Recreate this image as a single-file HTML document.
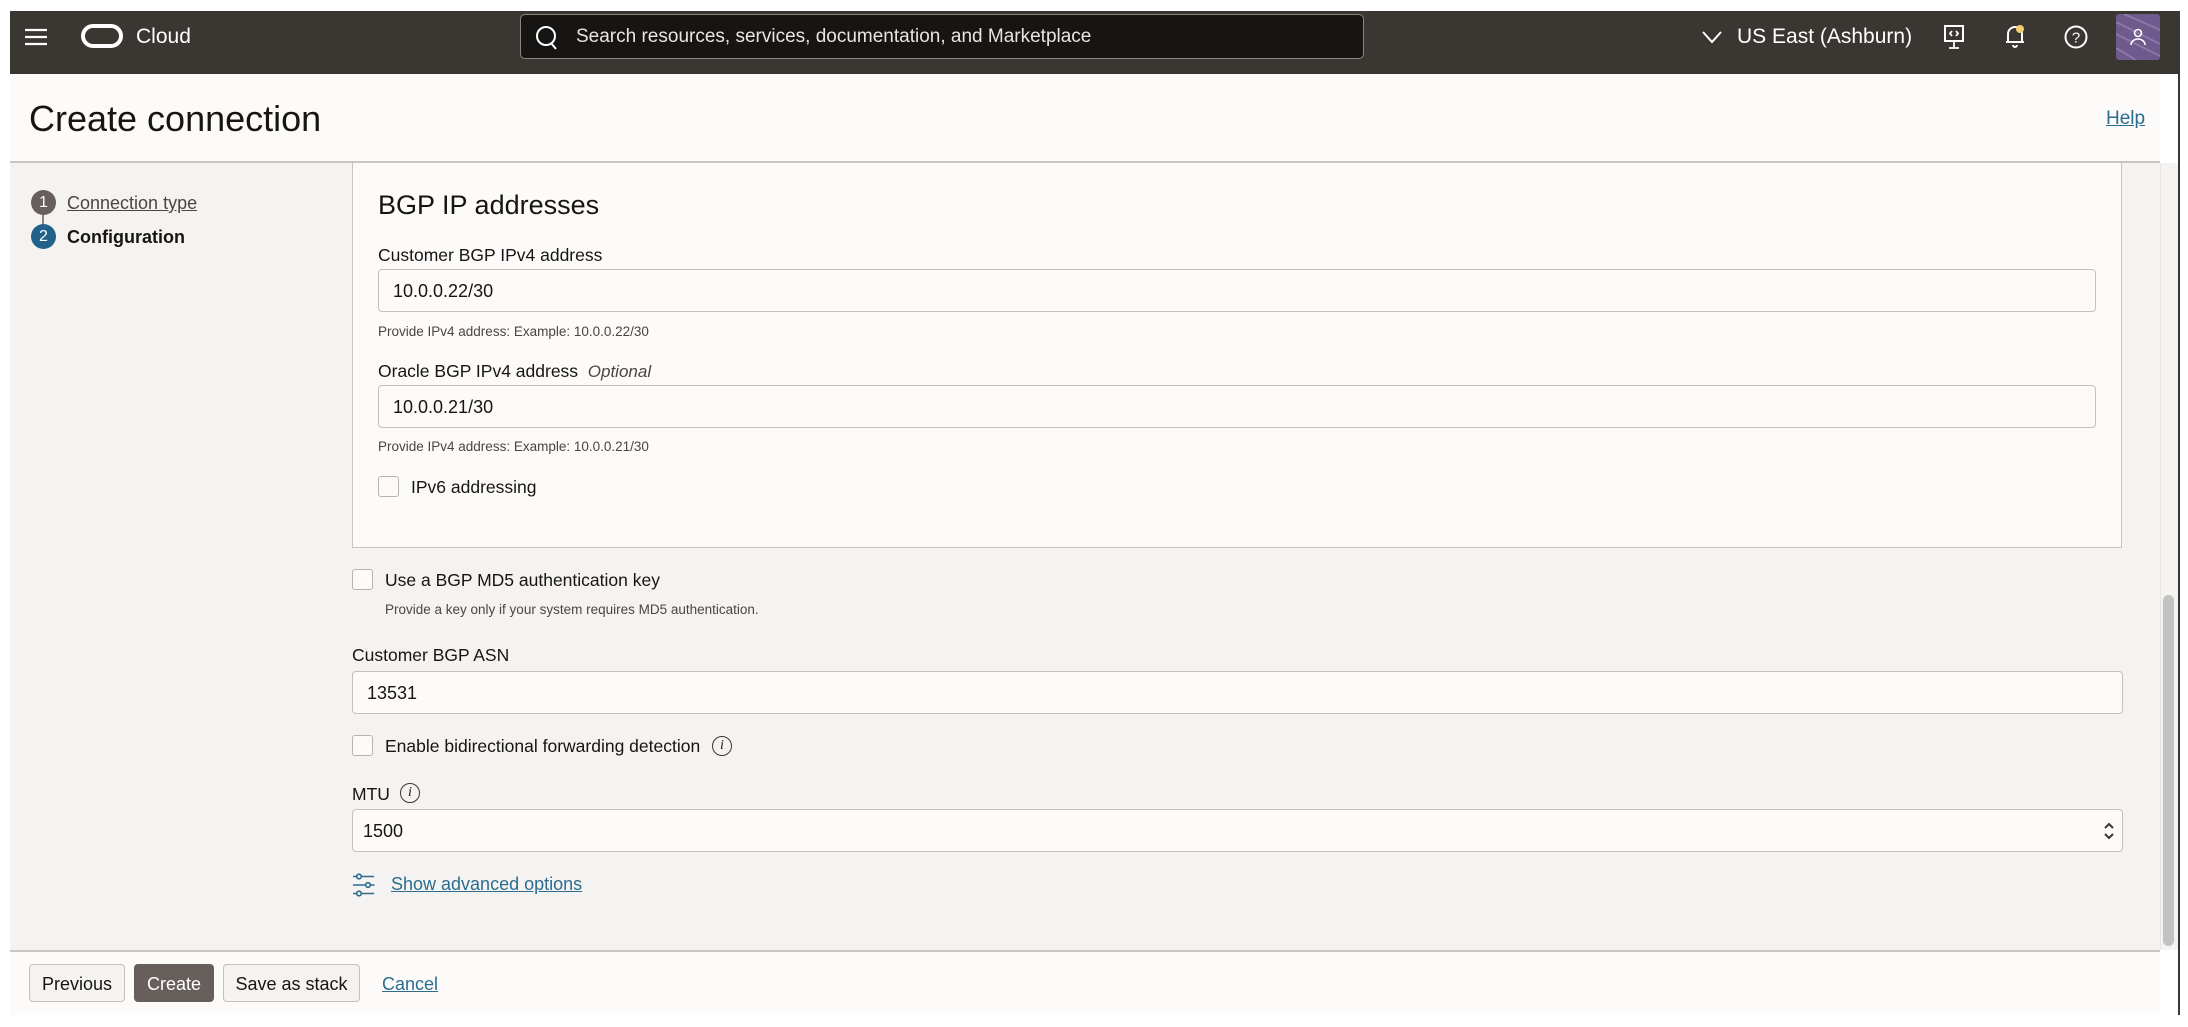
<!DOCTYPE html>
<html><head><meta charset="utf-8"><style>
*{box-sizing:border-box;margin:0;padding:0}
body{width:2188px;height:1027px;background:#fff;position:relative;overflow:hidden;font-family:"Liberation Sans",Arial,sans-serif;color:#161513}
.a{position:absolute}
.hdr{left:10px;top:11px;width:2168px;height:63px;background:#3a3632}
.search{left:520px;top:14px;width:844px;height:45px;background:#161513;border:1.5px solid #8b8580;border-radius:5px}
.title{left:10px;top:74px;width:2150px;height:89px;background:#fcfbfa;border-bottom:2px solid #c9c5c0}
.side{left:10px;top:163px;width:2150px;height:787px;background:#f5f3f1}
.box{left:352px;top:163px;width:1770px;height:385px;background:#fcfbfa;border:1.5px solid #c9c5c0;border-top:none}
.inp{background:#fcfbfa;border:1.5px solid #c4c0bb;border-radius:4px;font-size:18px;padding-left:14px;display:flex;align-items:center;padding-top:2px}
.lbl{font-size:17.5px}
.help{font-size:13.5px;color:#4a4541}
.cb{width:21px;height:21px;border:1.5px solid #b8b3ae;border-radius:3px;background:#fcfbfa}
.footer{left:10px;top:950px;width:2150px;height:65px;background:#fcfbfa;border-top:2px solid #c9c5c0}
.btn{top:964px;height:38px;border:1.5px solid #c4c0bb;border-radius:4px;background:#f5f3f1;font-size:18px;display:flex;align-items:center;justify-content:center;padding-top:2px}
.link{color:#2b6c8f;text-decoration:underline}
.info{width:20px;height:20px;border:1.5px solid #3a3632;border-radius:50%;font-family:"Liberation Serif",serif;font-style:italic;font-size:14px;display:flex;align-items:center;justify-content:center}
</style></head><body>
<div class="a hdr"></div>
<svg class="a" style="left:24px;top:27px" width="24" height="20"><path d="M1 3h22M1 10h22M1 17h22" stroke="#fff" stroke-width="2.2"/></svg>
<div class="a" style="left:81px;top:24px;width:42px;height:24px;border:4px solid #fff;border-radius:12px"></div>
<div class="a" style="left:136px;top:25px;font-size:21px;color:#fff">Cloud</div>
<div class="a search"></div>
<svg class="a" style="left:534px;top:24px" width="26" height="28"><circle cx="12" cy="12" r="9" fill="none" stroke="#fff" stroke-width="2"/><path d="M17 19l5 6" stroke="#fff" stroke-width="2"/></svg>
<div class="a" style="left:576px;top:26px;font-size:19px;color:#e8e5e1">Search resources, services, documentation, and Marketplace</div>
<svg class="a" style="left:1701px;top:29px" width="22" height="16"><path d="M2 3l9 10 9-10" fill="none" stroke="#fff" stroke-width="2"/></svg>
<div class="a" style="left:1737px;top:25px;font-size:21px;color:#fff">US East (Ashburn)</div>
<svg class="a" style="left:1942px;top:24px" width="24" height="26"><rect x="3" y="2" width="18" height="15" fill="none" stroke="#fff" stroke-width="2"/><path d="M12 17v6M7 24h10M10 7l-2 2.5 2 2.5M14 7l2 2.5-2 2.5" stroke="#fff" stroke-width="1.8" fill="none"/></svg>
<svg class="a" style="left:2003px;top:23px" width="24" height="28"><path d="M5 19V11a7 7 0 0 1 14 0v8zM3 19h18M10 22a2 2 0 0 0 4 0" fill="none" stroke="#fff" stroke-width="2"/><circle cx="17" cy="6" r="4" fill="#f2cf6e"/></svg>
<svg class="a" style="left:2063px;top:24px" width="26" height="26"><circle cx="13" cy="13" r="10.5" fill="none" stroke="#fff" stroke-width="2"/><text x="13" y="18.5" font-size="15" fill="#fff" text-anchor="middle" font-family="Liberation Sans">?</text></svg>
<div class="a" style="left:2116px;top:14px;width:44px;height:46px;background:#6e5a8c;border-radius:3px"><svg width="44" height="46"><path d="M0 8l44 22M0 20l44 22M8 0l36 16M0 34l20 12" stroke="#8a78a6" stroke-width="2"/><circle cx="22" cy="19" r="3.5" fill="none" stroke="#fff" stroke-width="1.6"/><path d="M15 31a7 6 0 0 1 14 0" fill="none" stroke="#fff" stroke-width="1.6"/></svg></div>

<div class="a title"></div>
<div class="a" style="left:29px;top:98px;font-size:36px;color:#161513">Create connection</div>
<div class="a link" style="left:2106px;top:108px;font-size:19px">Help</div>

<div class="a side"></div>
<div class="a" style="left:2160px;top:163px;width:18px;height:787px;background:#f5f3f1;border-left:1px solid #e8e5e1"></div>
<div class="a" style="left:2163px;top:595px;width:11px;height:351px;background:#c2c2c2;border-radius:6px"></div>
<div class="a" style="left:2178px;top:11px;width:2px;height:1004px;background:#3a3632"></div>

<div class="a" style="left:42px;top:212px;width:2px;height:16px;background:#8b8580"></div>
<div class="a" style="left:31px;top:190px;width:25px;height:25px;border-radius:50%;background:#665f5b;color:#fff;font-size:16px;display:flex;align-items:center;justify-content:center">1</div>
<div class="a" style="left:67px;top:193px;font-size:18px;color:#4a4541;text-decoration:underline">Connection type</div>
<div class="a" style="left:31px;top:224px;width:25px;height:25px;border-radius:50%;background:#22628a;color:#fff;font-size:16px;display:flex;align-items:center;justify-content:center">2</div>
<div class="a" style="left:67px;top:227px;font-size:18px;font-weight:bold">Configuration</div>

<div class="a box"></div>
<div class="a" style="left:378px;top:190px;font-size:27px">BGP IP addresses</div>
<div class="a lbl" style="left:378px;top:245px">Customer BGP IPv4 address</div>
<div class="a inp" style="left:378px;top:269px;width:1718px;height:43px">10.0.0.22/30</div>
<div class="a help" style="left:378px;top:324px">Provide IPv4 address: Example: 10.0.0.22/30</div>
<div class="a lbl" style="left:378px;top:361px">Oracle BGP IPv4 address&nbsp; <i style="color:#4a4541;font-size:17px">Optional</i></div>
<div class="a inp" style="left:378px;top:385px;width:1718px;height:43px">10.0.0.21/30</div>
<div class="a help" style="left:378px;top:439px">Provide IPv4 address: Example: 10.0.0.21/30</div>
<div class="a cb" style="left:378px;top:476px"></div>
<div class="a lbl" style="left:411px;top:477px">IPv6 addressing</div>

<div class="a cb" style="left:352px;top:569px"></div>
<div class="a lbl" style="left:385px;top:570px">Use a BGP MD5 authentication key</div>
<div class="a help" style="left:385px;top:602px">Provide a key only if your system requires MD5 authentication.</div>
<div class="a lbl" style="left:352px;top:645px">Customer BGP ASN</div>
<div class="a inp" style="left:352px;top:671px;width:1771px;height:43px">13531</div>
<div class="a cb" style="left:352px;top:735px"></div>
<div class="a lbl" style="left:385px;top:736px">Enable bidirectional forwarding detection</div>
<div class="a info" style="left:712px;top:736px">i</div>
<div class="a lbl" style="left:352px;top:784px">MTU</div>
<div class="a info" style="left:400px;top:783px">i</div>
<div class="a inp" style="left:352px;top:809px;width:1771px;height:43px;padding-left:10px">1500</div>
<svg class="a" style="left:2102px;top:821px" width="14" height="20"><path d="M3 7l4-4 4 4M3 13l4 4 4-4" fill="none" stroke="#3a3632" stroke-width="2"/></svg>
<svg class="a" style="left:352px;top:873px" width="24" height="24"><g stroke="#2b6c8f" stroke-width="1.6" fill="none"><circle cx="7" cy="3.5" r="2.3"/><path d="M10 3.5h12M1 3.5h3.5"/><circle cx="16" cy="12" r="2.3"/><path d="M1 12h12.5M18.5 12h4"/><circle cx="7" cy="20.5" r="2.3"/><path d="M10 20.5h12M1 20.5h3.5"/></g></svg>
<div class="a link" style="left:391px;top:874px;font-size:18px">Show advanced options</div>

<div class="a footer"></div>
<div class="a btn" style="left:29px;width:96px">Previous</div>
<div class="a btn" style="left:134px;width:80px;background:#665f5b;border-color:#665f5b;color:#fff">Create</div>
<div class="a btn" style="left:223px;width:137px">Save as stack</div>
<div class="a link" style="left:382px;top:974px;font-size:18px">Cancel</div>
</body></html>
